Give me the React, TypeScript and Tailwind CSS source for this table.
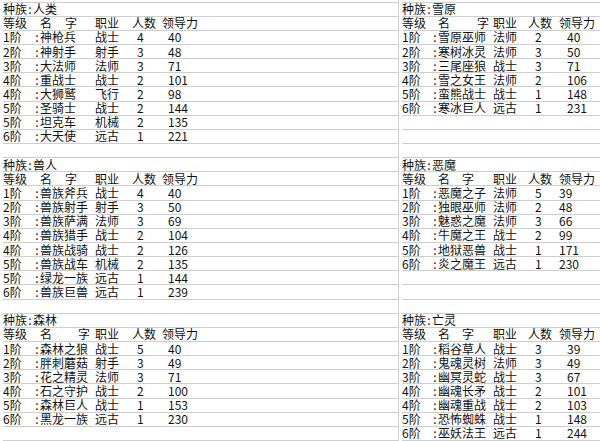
import React from 'react';

type Unit = [string, string, string, string, string];

type Row =
  | { kind: 'race'; name: string }
  | { kind: 'head'; gap: string }
  | { kind: 'unit'; unit: Unit }
  | { kind: 'blank' };

interface Layout {
  wrap: string;
  level: string;
  colon: string;
  name: string;
  job: string;
  count: string;
  countValue: string;
}

const leftLayout: Layout = {
  wrap: 'w-[399px] shrink-0 border-r border-[#cecece] pl-[3px]',
  level: 'w-[31px]',
  colon: 'w-[6px]',
  name: 'w-[55px]',
  job: 'w-[37px]',
  count: 'w-[30px]',
  countValue: 'pl-[5px]',
};

const rightLayout: Layout = {
  wrap: 'flex-1 min-w-0 pl-[3px]',
  level: 'w-[30px]',
  colon: 'w-[6px]',
  name: 'w-[55px]',
  job: 'w-[35px]',
  count: 'w-[31px]',
  countValue: 'pl-[7px]',
};

function section(race: string, gap: string, units: Unit[], leadPad: string): Row[] {
  return [
    { kind: 'race', name: race },
    { kind: 'head', gap },
    ...units.map((u) => ({ kind: 'unit' as const, unit: [u[0], u[1], u[2], u[3], u[4] + '|' + leadPad] as Unit })),
  ];
}

const blank: Row = { kind: 'blank' };

const leftRows: Row[] = [
  ...section('人类', 'ml-[13px]', [
    ['1阶', '神枪兵', '战士', '4', '40'],
    ['2阶', '神射手', '射手', '3', '48'],
    ['3阶', '大法师', '法师', '3', '71'],
    ['4阶', '重战士', '战士', '2', '101'],
    ['4阶', '大狮鹫', '飞行', '2', '98'],
    ['5阶', '圣骑士', '战士', '2', '144'],
    ['5阶', '坦克车', '机械', '2', '135'],
    ['6阶', '大天使', '远古', '1', '221'],
  ], 'l'),
  blank,
  ...section('兽人', 'ml-[13px]', [
    ['1阶', '兽族斧兵', '战士', '4', '40'],
    ['2阶', '兽族射手', '射手', '3', '50'],
    ['3阶', '兽族萨满', '法师', '3', '69'],
    ['4阶', '兽族猎手', '战士', '2', '104'],
    ['4阶', '兽族战骑', '战士', '2', '126'],
    ['5阶', '兽族战车', '机械', '2', '135'],
    ['5阶', '绿龙一族', '远古', '1', '144'],
    ['6阶', '兽族巨兽', '远古', '1', '239'],
  ], 'l'),
  blank,
  ...section('森林', 'ml-[26px]', [
    ['1阶', '森林之狼', '战士', '5', '40'],
    ['2阶', '胖刺蘑菇', '射手', '3', '49'],
    ['3阶', '花之精灵', '法师', '3', '71'],
    ['4阶', '石之守护', '战士', '2', '100'],
    ['5阶', '森林巨人', '战士', '1', '153'],
    ['6阶', '黑龙一族', '远古', '1', '230'],
  ], 'l'),
  blank,
];

const rightRows: Row[] = [
  ...section('雪原', 'ml-[27px]', [
    ['1阶', '雪原巫师', '法师', '2', '40'],
    ['2阶', '寒树冰灵', '法师', '3', '50'],
    ['3阶', '三尾座狼', '战士', '3', '71'],
    ['4阶', '雪之女王', '法师', '2', '106'],
    ['5阶', '蛮熊战士', '战士', '1', '148'],
    ['6阶', '寒冰巨人', '远古', '1', '231'],
  ], 'r'),
  blank,
  blank,
  blank,
  ...section('恶魔', 'ml-[12px]', [
    ['1阶', '恶魔之子', '法师', '5', '39'],
    ['2阶', '独眼巫师', '法师', '2', '48'],
    ['3阶', '魅惑之魔', '法师', '3', '66'],
    ['4阶', '牛魔之王', '战士', '2', '99'],
    ['5阶', '地狱恶兽', '战士', '1', '171'],
    ['6阶', '炎之魔王', '远古', '1', '230'],
  ], 'z'),
  blank,
  blank,
  blank,
  ...section('亡灵', 'ml-[12px]', [
    ['1阶', '稻谷草人', '战士', '3', '39'],
    ['2阶', '鬼魂灵树', '法师', '3', '49'],
    ['3阶', '幽冥灵蛇', '战士', '3', '67'],
    ['4阶', '幽魂长矛', '战士', '2', '101'],
    ['4阶', '幽魂重战', '战士', '2', '103'],
    ['5阶', '恐怖蜘蛛', '战士', '1', '148'],
    ['6阶', '巫妖法王', '远古', '1', '244'],
  ], 'r'),
];

const leadPads: Record<string, string> = {
  l: 'pl-[6px]',
  r: 'pl-[8px]',
  z: 'pl-0',
};

function SheetRow({ row, layout }: { row: Row; layout: Layout }) {
  const base = 'h-[14.15px] border-b border-[#cecece] flex items-center whitespace-nowrap';

  if (row.kind === 'blank') return <div className={base} />;

  if (row.kind === 'race') {
    return (
      <div className={base}>
        <span>种族</span>
        <span className="w-[6px] text-center">:</span>
        <span>{row.name}</span>
      </div>
    );
  }

  if (row.kind === 'head') {
    return (
      <div className={base}>
        <span className={layout.level}>等级</span>
        <span className={layout.colon} />
        <span className={`${layout.name} flex`}>
          <span>名</span>
          <span className={row.gap}>字</span>
        </span>
        <span className={layout.job}>职业</span>
        <span className={layout.count}>人数</span>
        <span>领导力</span>
      </div>
    );
  }

  const [level, name, job, count, leadRaw] = row.unit;
  const [lead, padKey] = leadRaw.split('|');
  return (
    <div className={base}>
      <span className={layout.level}>{level}</span>
      <span className={`${layout.colon} text-center`}>:</span>
      <span className={layout.name}>{name}</span>
      <span className={layout.job}>{job}</span>
      <span className={`${layout.count} ${layout.countValue}`}>{count}</span>
      <span className={leadPads[padKey]}>{lead}</span>
    </div>
  );
}

function Sheet({ rows, layout }: { rows: Row[]; layout: Layout }) {
  return (
    <div className={`${layout.wrap} pt-[1.6px]`}>
      <div className="border-t border-[#cecece]">
        {rows.map((row, i) => (
          <SheetRow key={i} row={row} layout={layout} />
        ))}
      </div>
    </div>
  );
}

export default function App() {
  return (
    <div
      className="w-[600px] h-[441px] overflow-hidden bg-white text-[12px] leading-[12px] text-[#111111] flex"
      style={{ fontFamily: '"Noto Sans CJK SC", "Noto Sans", sans-serif' }}
    >
      <Sheet rows={leftRows} layout={leftLayout} />
      <Sheet rows={rightRows} layout={rightLayout} />
    </div>
  );
}
